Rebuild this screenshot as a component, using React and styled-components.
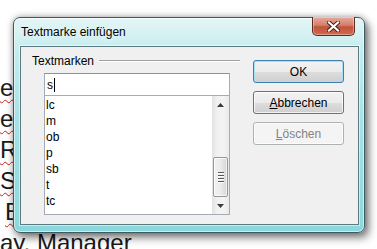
import styled, { createGlobalStyle } from "styled-components"

const GlobalStyle = createGlobalStyle`
    html, body {
        margin : 0;
        padding : 0;
        background : #ffffff;
    }
    body {
        font-family : "Liberation Sans", Arial, sans-serif;
    }
`

const Page = styled.div`
    position : relative;
    width : 377px;
    height : 249px;
    overflow : hidden;
    background : #ffffff;
`

const DocText = styled.div`
    padding-top : 72px;
    font-family : "Liberation Sans", Arial, sans-serif;
    font-size : 24px;
    line-height : 31px;
    color : #1a1a1a;
`

const DocLine = styled.div`
    white-space : nowrap;
    padding-left : ${props => props.$indent || 0}px;
    span {
        text-decoration : underline wavy #cc1f1f;
        text-decoration-thickness : 1px;
        text-decoration-skip-ink : none;
        text-underline-offset : 3px;
    }
`

const Window = styled.div`
    position : absolute;
    left : 13px;
    top : 17px;
    width : 352px;
    height : 216px;
    box-sizing : border-box;
    display : flex;
    flex-direction : column;
    border : 1px solid #3d5a60;
    border-radius : 7px;
    background : linear-gradient(to bottom, #e4f5f6 0%, #c4ecee 16%, #a4e2e5 50%, #8ad8dc 100%);
    box-shadow : inset 0 0 0 1px rgba(255,255,255,.55), 0 0 7px rgba(0,0,0,.35), 4px 5px 9px rgba(0,0,0,.45);
`

const TitleBar = styled.div`
    display : flex;
    align-items : flex-start;
    justify-content : space-between;
    height : 28px;
    padding-left : 7px;
`

const Title = styled.div`
    margin-top : 7px;
    font-size : 12px;
    line-height : 14px;
    color : #000000;
    text-shadow : 0 0 6px rgba(255,255,255,.9);
`

const CloseButton = styled.div`
    width : 43px;
    height : 19px;
    margin-right : 9px;
    margin-top : -1px;
    box-sizing : border-box;
    display : flex;
    align-items : center;
    justify-content : center;
    border : 1px solid #5e2a20;
    border-top : none;
    border-radius : 0 0 5px 5px;
    background : linear-gradient(to bottom, #e9a99b 0%, #d4806e 45%, #c2533b 55%, #cf6a4f 100%);
    box-shadow : inset 0 0 0 1px rgba(255,255,255,.35);
`

const Client = styled.div`
    flex : 1;
    margin : 0 5px 7px 6px;
    box-sizing : border-box;
    display : flex;
    border : 1px solid #5c7a80;
    background : #f0f0f0;
    box-shadow : 0 0 0 1px rgba(255,255,255,.5);
`

const LeftColumn = styled.div`
    width : 219px;
    box-sizing : border-box;
    padding-left : 11px;
    display : flex;
    flex-direction : column;
`

const LabelRow = styled.div`
    display : flex;
    height : 14px;
    margin-top : 7px;
`

const Label = styled.span`
    font-size : 12px;
    line-height : 14px;
    color : #000000;
`

const FixedLine = styled.div`
    flex : 1;
    margin : 6px 0 0 5px;
    height : 0;
    border-top : 1px solid #a0a0a0;
    border-bottom : 1px solid #ffffff;
`

const Edit = styled.div`
    width : 186px;
    height : 23px;
    margin : 5px 0 0 12px;
    box-sizing : border-box;
    display : flex;
    align-items : center;
    padding-left : 2px;
    border : 1px solid #a5acb5;
    border-top-color : #8e9399;
    background : #ffffff;
    font-size : 12px;
    color : #000000;
`

const Caret = styled.span`
    width : 1px;
    height : 14px;
    margin-left : 1px;
    background : #000000;
`

const ListBox = styled.div`
    width : 186px;
    height : 120px;
    margin : -1px 0 0 12px;
    box-sizing : border-box;
    display : flex;
    border : 1px solid #a5acb5;
    background : #ffffff;
`

const Items = styled.div`
    flex : 1;
    padding : 1px 0 0 1px;
`

const Item = styled.div`
    height : 16px;
    font-size : 12px;
    line-height : 16px;
    color : #000000;
`

const ScrollBar = styled.div`
    width : 17px;
    display : flex;
    flex-direction : column;
    background : linear-gradient(to right, #e2e2e2 0%, #f1f1f1 30%, #f3f3f3 70%, #e9e9e9 100%);
`

const ArrowButton = styled.div`
    height : 17px;
    display : flex;
    align-items : center;
    justify-content : center;
`

const Track = styled.div`
    flex : 1;
    display : flex;
    flex-direction : column;
    justify-content : flex-end;
`

const Thumb = styled.div`
    height : 40px;
    margin : 0 1px;
    box-sizing : border-box;
    display : flex;
    flex-direction : column;
    align-items : center;
    justify-content : center;
    gap : 1px;
    border : 1px solid #979797;
    border-radius : 2px;
    background : linear-gradient(to right, #f2f2f2 0%, #ebebeb 50%, #d6d6d6 100%);
    box-shadow : inset 0 0 0 1px rgba(255,255,255,.7);
`

const Grip = styled.div`
    width : 6px;
    height : 1px;
    background : #5a5a5a;
    border-bottom : 1px solid #ffffff;
`

const ButtonColumn = styled.div`
    margin-left : 13px;
    padding-top : 13px;
    display : flex;
    flex-direction : column;
    gap : 8px;
`

const Button = styled.div`
    width : 91px;
    height : 23px;
    box-sizing : border-box;
    display : flex;
    align-items : center;
    justify-content : center;
    border : 1px solid ${props => props.$default ? "#3c7fb1" : props.$disabled ? "#adb2b5" : "#707070"};
    border-radius : 3px;
    background : ${props => props.$disabled
        ? "#f4f4f4"
        : "linear-gradient(to bottom, #f2f2f2 0%, #ebebeb 50%, #dddddd 51%, #cfcfcf 100%)"};
    box-shadow : inset 0 0 0 1px ${props => props.$default ? "#a9e0f6" : "rgba(255,255,255,.75)"};
    font-size : 12px;
    color : ${props => props.$disabled ? "#838383" : "#000000"};
    u {
        text-underline-offset : 1px;
    }
`

const items = ["lc", "m", "ob", "p", "sb", "t", "tc"]
const docLines = [
    { text : "e" },
    { text : "en" },
    { text : "Ri" },
    { text : "Sc" },
    { text : "E", indent : 5 },
    { text : "ay, Manager" },
]

function Arrow(props){
    return(
        <svg width="7" height="4" viewBox="0 0 7 4">
            {props.up
                ? <polygon points="0,4 3.5,0 7,4" fill="#3c3c3c"/>
                : <polygon points="0,0 3.5,4 7,0" fill="#3c3c3c"/>}
        </svg>
    )
}

export default function App(){
    return(
        <Page>
            <GlobalStyle/>
            <DocText>
                {docLines.map((line, i) =>
                    <DocLine key={i} $indent={line.indent}><span>{line.text}</span></DocLine>
                )}
            </DocText>
            <Window>
                <TitleBar>
                    <Title>Textmarke einfügen</Title>
                    <CloseButton>
                        <svg width="13" height="11" viewBox="0 0 13 11">
                            <path d="M2 1.5 L11 9.5 M11 1.5 L2 9.5" stroke="#4a1a12" strokeWidth="4" strokeLinecap="square"/>
                            <path d="M2 1.5 L11 9.5 M11 1.5 L2 9.5" stroke="#ffffff" strokeWidth="2.2" strokeLinecap="square"/>
                        </svg>
                    </CloseButton>
                </TitleBar>
                <Client>
                    <LeftColumn>
                        <LabelRow>
                            <Label>Textmarken</Label>
                            <FixedLine/>
                        </LabelRow>
                        <Edit>s<Caret/></Edit>
                        <ListBox>
                            <Items>
                                {items.map(item => <Item key={item}>{item}</Item>)}
                            </Items>
                            <ScrollBar>
                                <ArrowButton><Arrow up/></ArrowButton>
                                <Track>
                                    <Thumb>
                                        <Grip/><Grip/><Grip/><Grip/>
                                    </Thumb>
                                </Track>
                                <ArrowButton><Arrow/></ArrowButton>
                            </ScrollBar>
                        </ListBox>
                    </LeftColumn>
                    <ButtonColumn>
                        <Button $default>OK</Button>
                        <Button><span><u>A</u>bbrechen</span></Button>
                        <Button $disabled><span><u>L</u>öschen</span></Button>
                    </ButtonColumn>
                </Client>
            </Window>
        </Page>
    )
}
